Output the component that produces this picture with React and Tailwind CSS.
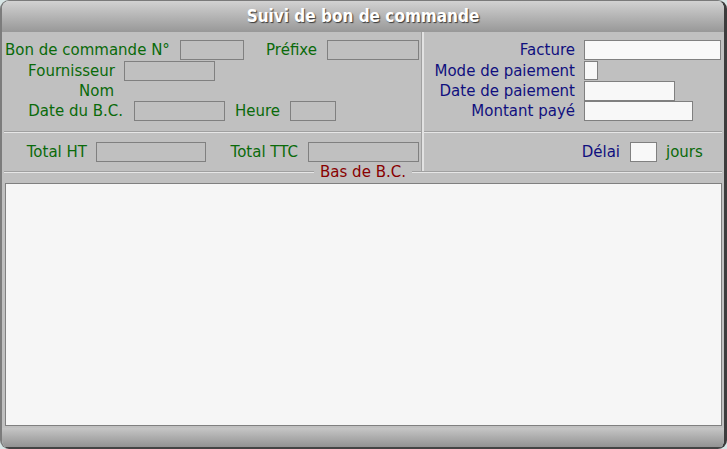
import React from "react";

const G = "text-[#0a6a0a]";
const B = "text-[#10107e]";

function Inp({ w, white, h = "h-[20px]" }) {
  return (
    <div
      className={`${w} ${h} shrink-0 border border-[#808080] ${white ? "bg-[#f8f8f8]" : "bg-[#c0c0c0]"}`}
    />
  );
}

function HSep({ cls = "" }) {
  return <div className={`h-[2px] border-t border-t-[#a0a0a0] border-b border-b-[#e6e6e6] ${cls}`} />;
}

export default function App() {
  return (
    <div className="w-[727px] h-[449px] bg-[#d8e6e6] font-['DejaVu_Sans',sans-serif] text-[15px] leading-[20px]">
      <div className="w-full h-full rounded-[9px] overflow-hidden flex flex-col border-l-2 border-l-[#7c7c7c] border-r-[3px] border-r-[#3c3c3c] border-t border-t-[#7a7a7a]">
        {/* title bar */}
        <div className="h-[31px] shrink-0 bg-gradient-to-b from-[#d2d2d2] to-[#989898] text-center text-white font-['DejaVu_Sans_Condensed','DejaVu_Sans',sans-serif] font-stretch-condensed font-bold text-[17px] leading-[31px] [text-shadow:1px_1px_1px_#3a3a3a]">
          Suivi de bon de commande
        </div>

        {/* body */}
        <div className="flex-1 bg-[#c0c0c0] flex flex-col">
          <div className="flex h-[139px]">
            {/* left column */}
            <div className="w-[419px] flex flex-col">
              <div className="h-[99px] pt-[8px] flex flex-col">
                <div className="h-[21px] flex items-start">
                  <span className={`w-[178px] pl-[3px] ${G}`}>Bon de commande N°</span>
                  <Inp w="w-[64px]" />
                  <span className={`w-[83px] text-right pr-[10px] ${G}`}>Préfixe</span>
                  <Inp w="w-[92px]" />
                </div>
                <div className="h-[20px] flex items-start">
                  <span className={`w-[122px] text-right pr-[9px] ${G}`}>Fournisseur</span>
                  <Inp w="w-[91px]" />
                </div>
                <div className="h-[20px] flex items-start">
                  <span className={`w-[122px] text-right pr-[10px] ${G}`}>Nom</span>
                </div>
                <div className="h-[20px] flex items-start">
                  <span className={`w-[132px] text-right pr-[11px] ${G}`}>Date du B.C.</span>
                  <Inp w="w-[91px]" />
                  <span className={`w-[65px] text-right pr-[10px] ${G}`}>Heure</span>
                  <Inp w="w-[46px]" />
                </div>
              </div>
              <HSep cls="ml-[2px]" />
              <div className="flex-1 pt-[9px] flex items-start">
                <span className={`w-[94px] text-right pr-[9px] ${G}`}>Total HT</span>
                <Inp w="w-[110px]" />
                <span className={`w-[102px] text-right pr-[10px] ${G}`}>Total TTC</span>
                <Inp w="w-[111px]" />
              </div>
            </div>

            {/* vertical separator */}
            <div className="w-[3px] flex shrink-0">
              <div className="w-[1px] bg-[#a0a0a0]" />
              <div className="w-[2px] bg-[#e2e2e2]" />
            </div>

            {/* right column */}
            <div className="flex-1 flex flex-col">
              <div className="h-[99px] pt-[8px] flex flex-col">
                <div className="h-[21px] flex items-start">
                  <span className={`w-[160px] text-right pr-[9px] ${B}`}>Facture</span>
                  <Inp w="w-[137px]" white />
                </div>
                <div className="h-[20px] flex items-start">
                  <span className={`w-[160px] text-right pr-[9px] ${B}`}>Mode de paiement</span>
                  <Inp w="w-[14px]" h="h-[19px]" white />
                </div>
                <div className="h-[20px] flex items-start">
                  <span className={`w-[160px] text-right pr-[9px] ${B}`}>Date de paiement</span>
                  <Inp w="w-[91px]" white />
                </div>
                <div className="h-[20px] flex items-start">
                  <span className={`w-[160px] text-right pr-[9px] ${B}`}>Montant payé</span>
                  <Inp w="w-[109px]" white />
                </div>
              </div>
              <HSep cls="mr-[2px]" />
              <div className="flex-1 pt-[9px] flex items-start">
                <span className={`w-[206px] text-right pr-[10px] ${B}`}>Délai</span>
                <Inp w="w-[27px]" white />
                <span className={`pl-[9px] ${G}`}>jours</span>
              </div>
            </div>
          </div>

          {/* legend row */}
          <div className="h-[12px] flex items-start">
            <HSep cls="ml-[2px] w-[310px]" />
            <span className="w-[98px] -mt-[9px] text-center text-[#880000] leading-[20px]">Bas de B.C.</span>
            <HSep cls="flex-1 mr-[2px]" />
          </div>

          {/* text area */}
          <div className="h-[243px] ml-[3px] mr-[2px] border border-[#808080] bg-[#f6f6f6]" />
          <div className="flex-1" />
        </div>

        {/* bottom bar */}
        <div className="h-[21px] shrink-0 bg-gradient-to-b from-[#c6c6c6] to-[#939393] border-b-2 border-b-[#444444]" />
      </div>
    </div>
  );
}
